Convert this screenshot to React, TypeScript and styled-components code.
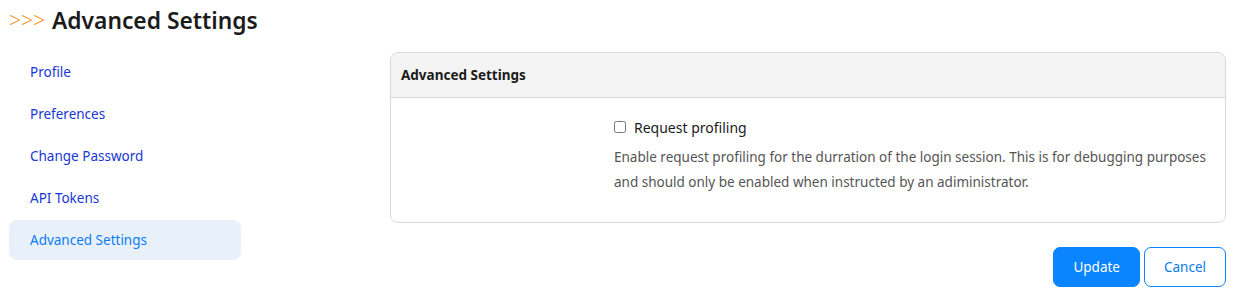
import styled, { createGlobalStyle } from "styled-components";

const GlobalStyle = createGlobalStyle`
  body {
    margin: 0;
    background: #ffffff;
    font-family: "Noto Sans", "Open Sans", sans-serif;
    color: #212529;
  }
`;

const Page = styled.div`
  width: 1241px;
  height: 302px;
  box-sizing: border-box;
  padding: 4px 15px 0 9px;
`;

const Title = styled.h1`
  margin: 0;
  height: 32px;
  display: flex;
  align-items: center;
  gap: 7px;
  font-size: 22.8px;
  font-weight: 600;
  color: #1b1b1b;
`;

const Chevrons = styled.span`
  color: #f29a2e;
  font-weight: 300;
  font-size: 21px;
  letter-spacing: 0;
`;

const Body = styled.div`
  display: grid;
  grid-template-columns: 232px 1fr;
  column-gap: 149px;
  margin-top: 16px;
`;

const Nav = styled.nav`
  display: flex;
  flex-direction: column;
  gap: 2px;
`;

const NavItem = styled.a<{ $active?: boolean }>`
  display: flex;
  align-items: center;
  height: 40px;
  padding-left: 21px;
  border-radius: 8px;
  font-size: 13.5px;
  text-decoration: none;
  color: ${(p) => (p.$active ? "#0d7bf2" : "#1737d6")};
  background: ${(p) => (p.$active ? "#e8f1fa" : "transparent")};
  cursor: pointer;
`;

const Content = styled.div`
  display: flex;
  flex-direction: column;
`;

const Card = styled.section`
  border: 1px solid #d9d9d9;
  border-radius: 8px;
  overflow: hidden;
`;

const CardHeader = styled.div`
  height: 44px;
  display: flex;
  align-items: center;
  padding: 0 10px;
  background: #f4f4f4;
  border-bottom: 1px solid #d9d9d9;
  font-size: 13.5px;
  font-weight: 700;
  color: #1b1b1b;
`;

const CardBody = styled.div`
  display: grid;
  grid-template-columns: 223px 1fr;
  padding: 18px 10px 27px 0;
`;

const Field = styled.div`
  grid-column: 2;
  display: flex;
  flex-direction: column;
`;

const CheckRow = styled.label`
  display: flex;
  align-items: center;
  gap: 8px;
  font-size: 14px;
  color: #1b1b1b;
  height: 22px;
`;

const Box = styled.input`
  width: 12px;
  height: 12px;
  margin: 0;
  accent-color: #0a84ff;
`;

const Help = styled.p`
  margin: 7px 0 0;
  font-size: 13.5px;
  line-height: 25px;
  color: #555555;
`;

const Actions = styled.div`
  display: flex;
  justify-content: flex-end;
  gap: 4px;
  margin-top: 24px;
`;

const Button = styled.button<{ $primary?: boolean }>`
  height: 40px;
  padding: 0 19px;
  border-radius: 7px;
  font-family: inherit;
  font-size: 13.5px;
  border: 1px solid #0a84ff;
  background: ${(p) => (p.$primary ? "#0a84ff" : "#ffffff")};
  color: ${(p) => (p.$primary ? "#ffffff" : "#0a7be8")};
  cursor: pointer;
`;

const navItems = ["Profile", "Preferences", "Change Password", "API Tokens", "Advanced Settings"];

export default function App(): JSX.Element {
  return (
    <>
      <GlobalStyle />
      <Page>
        <Title>
          <Chevrons>&gt;&gt;&gt;</Chevrons>
          Advanced Settings
        </Title>
        <Body>
          <Nav>
            {navItems.map((item) => (
              <NavItem key={item} $active={item === "Advanced Settings"}>
                {item}
              </NavItem>
            ))}
          </Nav>
          <Content>
            <Card>
              <CardHeader>Advanced Settings</CardHeader>
              <CardBody>
                <Field>
                  <CheckRow>
                    <Box type="checkbox" />
                    Request profiling
                  </CheckRow>
                  <Help>
                    Enable request profiling for the durration of the login session. This is for debugging purposes
                    and should only be enabled when instructed by an adiministrator.
                  </Help>
                </Field>
              </CardBody>
            </Card>
            <Actions>
              <Button $primary>Update</Button>
              <Button>Cancel</Button>
            </Actions>
          </Content>
        </Body>
      </Page>
    </>
  );
}
